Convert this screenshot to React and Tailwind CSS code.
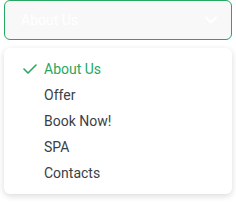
const ITEMS = ["About Us", "Offer", "Book Now!", "SPA", "Contacts"]

export default function App() {
  const selected = "About Us"
  return (
    <div className="w-[236px] h-[203px] bg-white px-1" style={{ fontFamily: "Roboto, 'Liberation Sans', sans-serif" }}>
      <button className="w-full h-10 flex items-center justify-between pl-4 pr-[14px] bg-[#f8f8f8] border border-[#27a762] rounded-md">
        <span className="text-[14px] text-white">About Us</span>
        <svg width="12" height="8" viewBox="0 0 12 8" fill="none">
          <path d="M1 1.5l5 5 5-5" stroke="#fff" strokeWidth="1.8" strokeLinecap="round" strokeLinejoin="round" />
        </svg>
      </button>
      <ul className="mt-2 py-2 bg-white rounded-md shadow-[0_2px_6px_rgba(0,0,0,0.15)]">
        {ITEMS.map(item => {
          const on = item === selected
          return (
            <li key={item} className={`h-[26px] flex items-center text-[14px] ${on ? "text-[#27a762]" : "text-[#3a3f47]"}`}>
              <span className="w-10 flex justify-end pr-[7px]">
                {on && (
                  <svg width="14" height="10" viewBox="0 0 14 10" fill="none">
                    <path d="M1 5l4 4 8-8" stroke="#27a762" strokeWidth="1.6" strokeLinecap="round" strokeLinejoin="round" />
                  </svg>
                )}
              </span>
              {item}
            </li>
          )
        })}
      </ul>
    </div>
  )
}
